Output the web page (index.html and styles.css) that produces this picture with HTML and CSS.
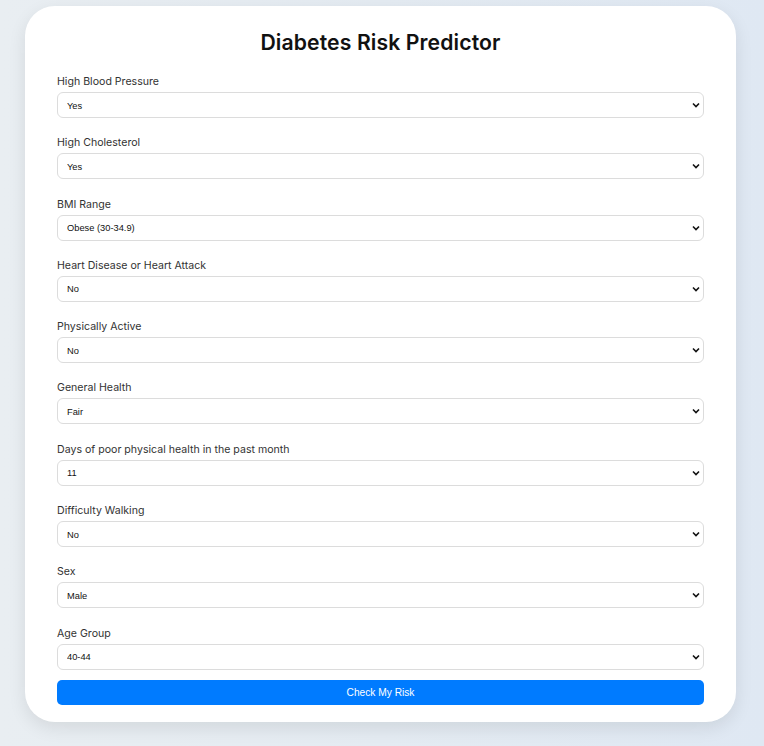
FILE: index.html
```html
<!DOCTYPE html>
<html lang="en">
<head>
<meta charset="utf-8">
<title>Diabetes Risk Predictor</title>
<link rel="stylesheet" href="styles.css">
</head>
<body>
<main class="card">
  <h1 class="title">Diabetes Risk Predictor</h1>
  <form class="form">
    <div class="group">
      <label class="label">High Blood Pressure</label>
      <select class="select"><option>Yes</option><option>No</option></select>
    </div>
    <div class="group">
      <label class="label">High Cholesterol</label>
      <select class="select"><option>Yes</option><option>No</option></select>
    </div>
    <div class="group">
      <label class="label">BMI Range</label>
      <select class="select"><option>Obese (30-34.9)</option></select>
    </div>
    <div class="group">
      <label class="label">Heart Disease or Heart Attack</label>
      <select class="select"><option>No</option><option>Yes</option></select>
    </div>
    <div class="group">
      <label class="label">Physically Active</label>
      <select class="select"><option>No</option><option>Yes</option></select>
    </div>
    <div class="group">
      <label class="label">General Health</label>
      <select class="select"><option>Fair</option></select>
    </div>
    <div class="group">
      <label class="label">Days of poor physical health in the past month</label>
      <select class="select"><option>11</option></select>
    </div>
    <div class="group">
      <label class="label">Difficulty Walking</label>
      <select class="select"><option>No</option><option>Yes</option></select>
    </div>
    <div class="group">
      <label class="label">Sex</label>
      <select class="select"><option>Male</option><option>Female</option></select>
    </div>
    <div class="group last">
      <label class="label">Age Group</label>
      <select class="select"><option>40-44</option></select>
    </div>
    <button type="button" class="button">Check My Risk</button>
  </form>
</main>
</body>
</html>
```

FILE: styles.css
```css
* { box-sizing: border-box; }
html, body { height: 100%; }
body {
  margin: 0;
  background: linear-gradient(90deg, #e9eef2 0%, #e4ebf2 50%, #dfe8f3 100%);
  font-family: "Inter", "Open Sans", sans-serif;
  padding: 6px 28px 0 25px;
}
.card {
  width: 711px;
  background: #fff;
  border-radius: 30px;
  box-shadow: 0 6px 18px rgba(0, 0, 0, 0.09);
  padding: 22px 32px 17px;
}
.title {
  margin: 0 0 19px;
  text-align: center;
  font-size: 21.2px;
  font-weight: 600;
  color: #111;
  line-height: 28px;
  letter-spacing: 0.1px;
}
.form { display: flex; flex-direction: column; }
.group { display: flex; flex-direction: column; margin-bottom: 18.3px; }
.group.last { margin-bottom: 10px; }
.label {
  font-size: 10.6px;
  color: #333;
  line-height: 14px;
  margin-bottom: 3px;
}
.select {
  -webkit-appearance: none;
  appearance: none;
  height: 26px;
  width: 100%;
  border: 1px solid #dcdcdc;
  border-radius: 6px;
  background-color: #fff;
  background-image: url("data:image/svg+xml,%3Csvg xmlns='http://www.w3.org/2000/svg' width='8' height='6' viewBox='0 0 8 6'%3E%3Cpath d='M1 1.5 L4 4.5 L7 1.5' fill='none' stroke='%23111' stroke-width='1.6'/%3E%3C/svg%3E");
  background-repeat: no-repeat;
  background-position: right 3px center;
  background-size: 8px 6px;
  font-family: "Liberation Sans", Arial, sans-serif;
  font-size: 9.3px;
  color: #111;
  padding: 1px 5px 0 9px;
}
.button {
  height: 25px;
  width: 100%;
  border: none;
  border-radius: 5px;
  background: #007bff;
  color: #fff;
  font-family: "Liberation Sans", Arial, sans-serif;
  font-size: 10.2px;
}
```
